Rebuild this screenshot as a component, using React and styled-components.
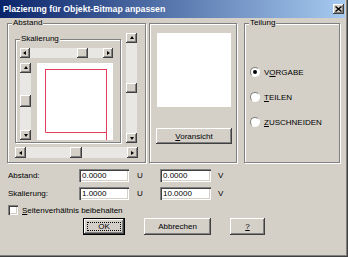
import React from 'react';
import styled, { createGlobalStyle, css } from 'styled-components';

const GlobalStyle = createGlobalStyle`
  html, body { margin: 0; padding: 0; background: #d4d0c8; }
  body {
    font-family: "Liberation Sans", Arial, sans-serif;
    font-size: 8px;
    color: #000;
  }
  * { box-sizing: border-box; }
`;

const raised = css`
  background: #d4d0c8;
  box-shadow: inset -1px -1px 0 #404040, inset 1px 1px 0 #fff, inset -2px -2px 0 #808080;
`;

const sunken = css`
  background: #fff;
  box-shadow: inset 1px 1px 0 #808080, inset 2px 2px 0 #404040, inset -1px -1px 0 #fff, inset -2px -2px 0 #d4d0c8;
`;

const Window = styled.div`
  width: 348px;
  height: 257px;
  padding: 0 3px 3px 0;
  background: #d4d0c8;
  box-shadow: inset -1px -1px 0 #404040, inset -2px -2px 0 #808080;
  display: flex;
  flex-direction: column;
`;

const TitleBar = styled.div`
  height: 18px;
  flex: 0 0 18px;
  display: flex;
  align-items: center;
  justify-content: space-between;
  padding: 0 1px 0 3px;
  background: linear-gradient(to right, #0a246a, #a6caf0);
  color: #fff;
  font-weight: bold;
  font-size: 8.7px;
`;

const CloseBtn = styled.div`
  ${raised};
  width: 11px;
  height: 10px;
  display: flex;
  align-items: center;
  justify-content: center;
`;

const Body = styled.div`
  flex: 1;
  display: flex;
  flex-direction: column;
  padding: 5px 6px 0 7px;
`;

const GroupRow = styled.div`
  display: flex;
  height: 140px;
`;

const Group = styled.div`
  position: relative;
  flex: 0 0 auto;
  width: ${p => p.$w}px;
  height: ${p => p.$h}px;
  margin-left: ${p => p.$ml || 0}px;
  padding: ${p => p.$pad || '0'};
  border: 1px solid #808080;
  box-shadow: inset 1px 1px 0 #fff, 1px 1px 0 #fff;
  display: flex;
  flex-direction: column;
  align-items: flex-start;
`;

const Legend = styled.span`
  position: absolute;
  top: -6px;
  left: 4px;
  padding: 0 1px;
  line-height: 10px;
  background: #d4d0c8;
`;

const TopArea = styled.div`
  display: flex;
  align-items: flex-end;
  gap: 5px;
`;

const Row = styled.div`
  display: flex;
  gap: ${p => p.$gap || 0}px;
  margin-top: ${p => p.$mt || 0}px;
`;

/* scrollbars */
const HBar = styled.div`
  display: flex;
  flex: 0 0 auto;
  width: ${p => p.$w}px;
  height: ${p => p.$h}px;
  margin-top: ${p => p.$mt || 0}px;
  background: #e9e7e3;
`;

const VBar = styled.div`
  display: flex;
  flex-direction: column;
  flex: 0 0 auto;
  width: ${p => p.$w}px;
  height: ${p => p.$h}px;
  background: #e9e7e3;
`;

const Track = styled.div`
  flex: 1;
  display: flex;
  flex-direction: ${p => (p.$vertical ? 'column' : 'row')};
`;

const Thumb = styled.div`
  ${raised};
  flex: 0 0 ${p => p.$size}px;
`;

const Arrow = styled.div`
  ${raised};
  flex: 0 0 ${p => p.$size}px;
  display: flex;
  align-items: center;
  justify-content: center;
  &::after {
    content: '';
    width: 0;
    height: 0;
    border: 2px solid transparent;
    ${p => p.$dir === 'up' && css`border-bottom: 3px solid #000; border-top-width: 0; margin-top: -1px;`}
    ${p => p.$dir === 'down' && css`border-top: 3px solid #000; border-bottom-width: 0;`}
    ${p => p.$dir === 'left' && css`border-right: 3px solid #000; border-left-width: 0; margin-left: -1px;`}
    ${p => p.$dir === 'right' && css`border-left: 3px solid #000; border-right-width: 0;`}
  }
`;

function HScroll({ w, h, at, thumb, mt }) {
  return (
    <HBar $w={w} $h={h} $mt={mt}>
      <Arrow $size={h} $dir="left" />
      <Track>
        <div style={{ width: at }} />
        <Thumb $size={thumb} />
      </Track>
      <Arrow $size={h} $dir="right" />
    </HBar>
  );
}

function VScroll({ w, h, at, thumb }) {
  return (
    <VBar $w={w} $h={h}>
      <Arrow $size={10} $dir="up" />
      <Track $vertical>
        <div style={{ height: at }} />
        <Thumb $size={thumb} />
      </Track>
      <Arrow $size={10} $dir="down" />
    </VBar>
  );
}

const Preview = styled.div`
  flex: 0 0 auto;
  width: ${p => p.$w}px;
  height: ${p => p.$h}px;
  background: #fff;
  margin-left: ${p => p.$ml || 0}px;
`;

const Button = styled.div`
  ${raised};
  width: ${p => p.$w}px;
  height: ${p => p.$h || 17}px;
  margin-top: ${p => p.$mt || 0}px;
  margin-left: ${p => p.$ml || 0}px;
  display: flex;
  align-items: center;
  justify-content: center;
  ${p => p.$default && css`
    padding: 4px;
    align-items: stretch;
    box-shadow: inset 0 0 0 1px #000, inset -2px -2px 0 #404040, inset 2px 2px 0 #fff, inset -3px -3px 0 #808080;
  `}
`;

const Focus = styled.span`
  flex: 1;
  display: flex;
  align-items: center;
  justify-content: center;
  border: 1px dotted #000;
`;

const RadioList = styled.div`
  display: flex;
  flex-direction: column;
  gap: 13px;
  padding: 42px 0 0 5px;
`;

const RadioRow = styled.div`
  display: flex;
  align-items: center;
  gap: 4px;
  height: 12px;
`;

const RadioDot = styled.span`
  width: 10px;
  height: 10px;
  border-radius: 50%;
  background: #fff;
  border: 1px solid;
  border-color: #808080 #fff #fff #808080;
  display: flex;
  align-items: center;
  justify-content: center;
  &::after {
    content: '';
    width: 4px;
    height: 4px;
    border-radius: 50%;
    background: ${p => (p.$on ? '#000' : 'transparent')};
  }
`;

const Form = styled.div`
  display: grid;
  grid-template-columns: 71px 50px 31px 51px auto;
  grid-auto-rows: 13px;
  row-gap: 5px;
  align-items: center;
  margin: 6px 0 0 1px;
`;

const Unit = styled.span`
  padding-left: ${p => p.$pl}px;
`;

const Field = styled.div`
  ${sunken};
  height: 13px;
  padding: 0 3px;
  display: flex;
  align-items: center;
`;

const CheckRow = styled.div`
  display: flex;
  align-items: center;
  gap: 4px;
  margin: 5px 0 0 1px;
`;

const CheckBox = styled.span`
  ${sunken};
  width: 10px;
  height: 10px;
`;

const ButtonRow = styled.div`
  display: flex;
  gap: 19px;
  margin: 3px 0 0 76px;
`;

export default function App() {
  return (
    <>
      <GlobalStyle />
      <Window>
        <TitleBar>
          <span>Plazierung für Objekt-Bitmap anpassen</span>
          <CloseBtn>
            <svg width="7" height="6" viewBox="0 0 7 6">
              <path d="M0.5 0.5 L6.5 5.5 M6.5 0.5 L0.5 5.5" stroke="#000" strokeWidth="1.4" />
            </svg>
          </CloseBtn>
        </TitleBar>
        <Body>
          <GroupRow>
            <Group $w={139} $h={140} $pad="9px 0 0 7px">
              <Legend>Abstand</Legend>
              <TopArea>
                <Group $w={106} $h={104} $pad="8px 0 0 4px">
                  <Legend>Skalierung</Legend>
                  <HScroll w={93} h={10} at={47} thumb={11} />
                  <Row $gap={6} $mt={5}>
                    <VScroll w={11} h={77} at={22} thumb={12} />
                    <Preview $w={76} $h={77}>
                      <svg width="76" height="77" viewBox="0 0 76 77">
                        <path
                          d="M8.5 6 V69.5 H69.5 M8 6.5 H69.5 M69.5 6 V77"
                          fill="none"
                          stroke="#e0405c"
                          strokeWidth="1"
                        />
                      </svg>
                    </Preview>
                  </Row>
                </Group>
                <VScroll w={11} h={110} at={40} thumb={10} />
              </TopArea>
              <HScroll w={123} h={11} at={44} thumb={12} mt={4} />
            </Group>

            <Group $w={88} $h={140} $ml={3} $pad="9px 0 0 7px">
              <Preview $w={74} $h={74} />
              <Button $w={76} $h={16} $mt={21} $ml={-1}>
                <span><u>V</u>oransicht</span>
              </Button>
            </Group>

            <Group $w={96} $h={140} $ml={7}>
              <Legend>Teilung</Legend>
              <RadioList>
                <RadioRow>
                  <RadioDot $on />
                  <span>V<u>O</u>RGABE</span>
                </RadioRow>
                <RadioRow>
                  <RadioDot />
                  <span><u>T</u>EILEN</span>
                </RadioRow>
                <RadioRow>
                  <RadioDot />
                  <span><u>Z</u>USCHNEIDEN</span>
                </RadioRow>
              </RadioList>
            </Group>
          </GroupRow>

          <Form>
            <span>Abstand:</span>
            <Field>0.0000</Field>
            <Unit $pl={8}>U</Unit>
            <Field>0.0000</Field>
            <Unit $pl={7}>V</Unit>
            <span>Skalierung:</span>
            <Field>1.0000</Field>
            <Unit $pl={8}>U</Unit>
            <Field>10.0000</Field>
            <Unit $pl={7}>V</Unit>
          </Form>

          <CheckRow>
            <CheckBox />
            <span><u>S</u>eitenverhältnis beibehalten</span>
          </CheckRow>

          <ButtonRow>
            <Button $w={42} $default>
              <Focus>OK</Focus>
            </Button>
            <Button $w={67}>Abbrechen</Button>
            <Button $w={35}><u>?</u></Button>
          </ButtonRow>
        </Body>
      </Window>
    </>
  );
}
